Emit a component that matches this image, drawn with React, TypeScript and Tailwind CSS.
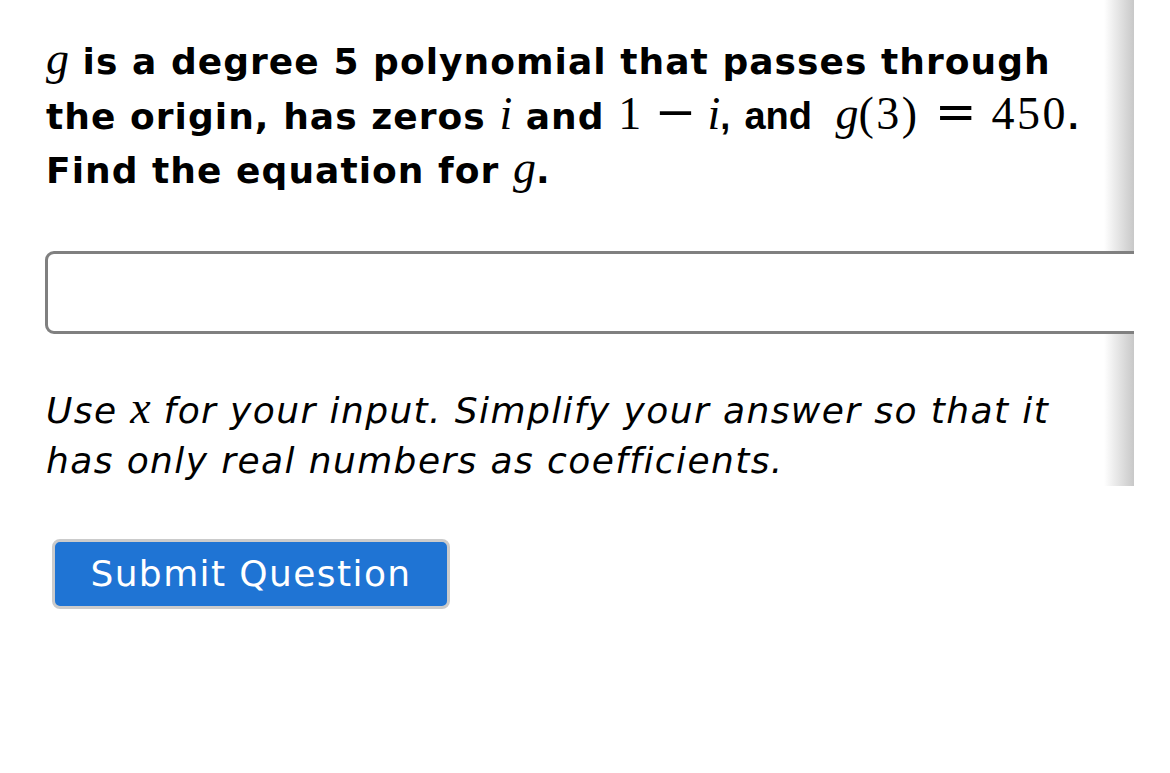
import React from "react";

const M = ({ children, it = true, cls = "" }: { children: React.ReactNode; it?: boolean; cls?: string }) => (
  <span
    className={`font-normal text-[46px] leading-[0] ${it ? "italic tracking-normal" : "tracking-[2.5px]"} ${cls}`}
    style={{ fontFamily: '"Liberation Serif", "DejaVu Serif", serif' }}
  >
    {children}
  </span>
);

const Op = ({ children, cls = "mx-[11px]" }: { children: React.ReactNode; cls?: string }) => (
  <span
    className={`${cls} font-normal text-[50px] leading-[0] tracking-normal`}
    style={{ fontFamily: '"DejaVu Serif", "Liberation Serif", serif' }}
  >
    {children}
  </span>
);

const A = ({ children, cls = "" }: { children: React.ReactNode; cls?: string }) => (
  <span className={`tracking-normal ${cls}`} style={{ fontFamily: '"Liberation Sans", Arial, sans-serif' }}>
    {children}
  </span>
);

export default function App() {
  return (
    <div className="min-h-[773px] w-[1170px] bg-white text-black" style={{ fontFamily: '"DejaVu Sans", Verdana, sans-serif' }}>
      <div className="w-[1134px] overflow-hidden pt-[35px] bg-[linear-gradient(to_right,rgba(255,255,255,0),#c8c8c8)] bg-no-repeat bg-right bg-[length:30px_100%]">
        <div className="whitespace-nowrap pl-[46px] text-[36px] font-bold leading-[54px] tracking-[1.05px]">
          <M>g</M> is a degree 5 polynomial that passes through
          <br />
          the origin, has zeros <M>i</M> and <M it={false}>1</M>
          <Op>−</Op>
          <M>i</M>
          <A>,</A>
          <A cls="ml-[14px] text-[38px]">and</A> <M cls="ml-[10px]">g</M>
          <M it={false}>(3)</M>
          <Op cls="mx-[15px]">=</Op>
          <M it={false}>450</M>
          <A cls="text-[38px]">.</A>
          <br />
          Find the equation for <M>g</M>.
        </div>
        <div className="mt-[53px] pl-[45px]">
          <div className="h-[83px] w-[1200px] rounded-[9px] border-[3px] border-[#808080] bg-white" />
        </div>
        <div className="mt-[52px] whitespace-nowrap pl-[46px] text-[36px] italic leading-[50px] tracking-[1.4px]">
          Use <M>x</M> for your input. Simplify your answer so that it
          <br />
          has only real numbers as coefficients.
        </div>
      </div>
      <div className="mt-[53px] pl-[52px]">
        <button className="h-[70px] w-[398px] rounded-[8px] border-[3px] border-[#cbcbcb] bg-[#1f74d4] text-[36px] tracking-[1.4px] text-white">
          Submit Question
        </button>
      </div>
    </div>
  );
}
